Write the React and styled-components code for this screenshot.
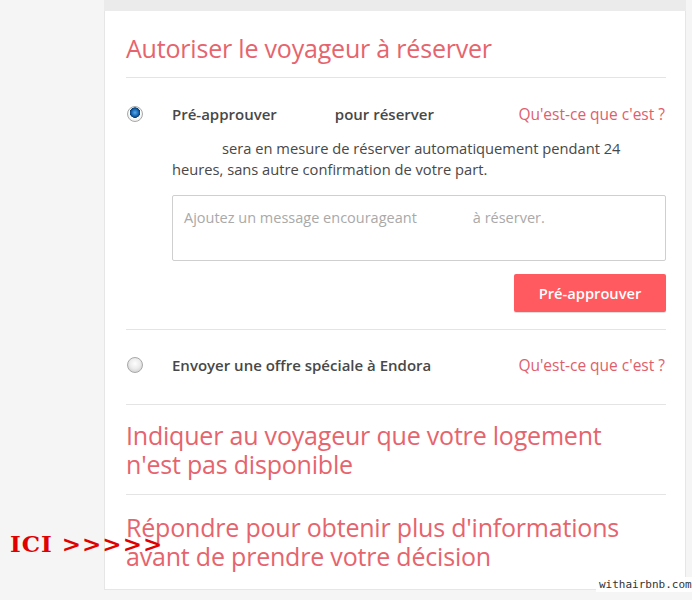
import React from "react";
import styled, { createGlobalStyle } from "styled-components";

const Global = createGlobalStyle`
  html, body { margin: 0; padding: 0; background: #f5f5f5; }
  body { font-family: "Open Sans", "Lato", sans-serif; }
`;

const Page = styled.div`
  position: relative;
  width: 692px;
  height: 600px;
  overflow: hidden;
  padding-left: 104px;
  box-sizing: border-box;
`;

const Column = styled.div`
  width: 582px;
  display: flex;
  flex-direction: column;
`;

const TopStrip = styled.div`
  height: 11px;
  background: #ebebeb;
`;

const Card = styled.div`
  background: #fff;
  border: 1px solid #e6e6e6;
  border-top: none;
  padding: 0 19px 0 21px;
  height: 579px;
  box-sizing: border-box;
`;

const Section = styled.div`
  border-bottom: ${(p) => (p.$last ? "none" : "1px solid #e4e4e4")};
  padding: ${(p) => p.$pad};
`;

const Heading = styled.div`
  color: #e6646d;
  font-family: "Open Sans", sans-serif;
  font-weight: 400;
  font-size: 25px;
  line-height: 29px;
  letter-spacing: -0.2px;
  white-space: nowrap;
`;

const OptionRow = styled.div`
  display: flex;
  align-items: center;
  line-height: 20px;
`;

const Radio = styled.span`
  width: 16px;
  height: 16px;
  border-radius: 50%;
  flex: none;
  box-sizing: border-box;
  border: 1px solid #a8a8a8;
  background: ${(p) =>
    p.$checked
      ? "radial-gradient(circle at 50% 40%, #5aa8e6 0, #1b6fbe 3px, #0b3c70 5px, #fff 5.5px, #f2f2f2 7px)"
      : "radial-gradient(circle at 50% 40%, #fdfdfd 0, #ececec 5px, #d8d8d8 8px)"};
  margin-left: 1px;
`;

const Label = styled.div`
  flex: 1;
  margin-left: 29px;
  font-weight: 600;
  font-size: 15px;
  color: #484848;
`;

const Blank = styled.span`
  display: inline-block;
  width: ${(p) => p.$w}px;
`;

const Link = styled.a`
  color: #e05e6c;
  font-size: 15.5px;
  text-decoration: none;
  margin-right: 1px;
`;

const Description = styled.p`
  margin: 14px 0 0 46px;
  font-size: 14.7px;
  line-height: 21px;
  color: #484848;
  max-width: 470px;
`;

const Message = styled.div`
  margin: 15px 0 0 46px;
  height: 66px;
  border: 1px solid #cfcfcf;
  border-radius: 2px;
  box-sizing: border-box;
  padding: 12px 11px;
  color: #a9a9a9;
  font-size: 14.5px;
  line-height: 20px;
`;

const Actions = styled.div`
  display: flex;
  justify-content: flex-end;
  margin-top: 13px;
`;

const Button = styled.button`
  width: 152px;
  height: 38px;
  background: #ff5a5f;
  color: #fff;
  border: none;
  border-radius: 2px;
  font-family: "Open Sans", sans-serif;
  font-weight: 600;
  font-size: 14.7px;
  box-shadow: 0 1px 1px rgba(0,0,0,0.15);
`;

const Note = styled.div`
  position: absolute;
  left: 10px;
  top: 530px;
  color: #e00000;
  font-family: "DejaVu Serif", serif;
  font-weight: 700;
  font-size: 23px;
  letter-spacing: 1px;
`;

const Watermark = styled.div`
  position: absolute;
  left: 596px;
  top: 577px;
  padding: 1px 3px;
  background: rgba(255,255,255,0.9);
  color: #333;
  font-family: "DejaVu Sans Mono", monospace;
  font-size: 11px;
`;

export default function App() {
  return (
    <>
      <Global />
      <Page>
        <Column>
          <TopStrip />
          <Card>
            <Section $pad="23px 0 14px">
              <Heading>Autoriser le voyageur à réserver</Heading>
            </Section>
            <Section $pad="26px 0 17px">
              <OptionRow>
                <Radio $checked />
                <Label>
                  Pré-approuver<Blank $w={58} />pour réserver
                </Label>
                <Link href="#">Qu'est-ce que c'est ?</Link>
              </OptionRow>
              <Description>
                <Blank $w={50} />sera en mesure de réserver automatiquement pendant 24 heures, sans autre confirmation de votre part.
              </Description>
              <Message>
                Ajoutez un message encourageant<Blank $w={56} />à réserver.
              </Message>
              <Actions>
                <Button>Pré-approuver</Button>
              </Actions>
            </Section>
            <Section $pad="25px 0 29px">
              <OptionRow>
                <Radio />
                <Label>Envoyer une offre spéciale à Endora</Label>
                <Link href="#">Qu'est-ce que c'est ?</Link>
              </OptionRow>
            </Section>
            <Section $pad="16px 0 15px">
              <Heading>
                Indiquer au voyageur que votre logement
                <br />n'est pas disponible
              </Heading>
            </Section>
            <Section $last $pad="18px 0 0">
              <Heading>
                Répondre pour obtenir plus d'informations
                <br />avant de prendre votre décision
              </Heading>
            </Section>
          </Card>
        </Column>
        <Note>ICI &gt;&gt;&gt;&gt;&gt;</Note>
        <Watermark>withairbnb.com</Watermark>
      </Page>
    </>
  );
}
